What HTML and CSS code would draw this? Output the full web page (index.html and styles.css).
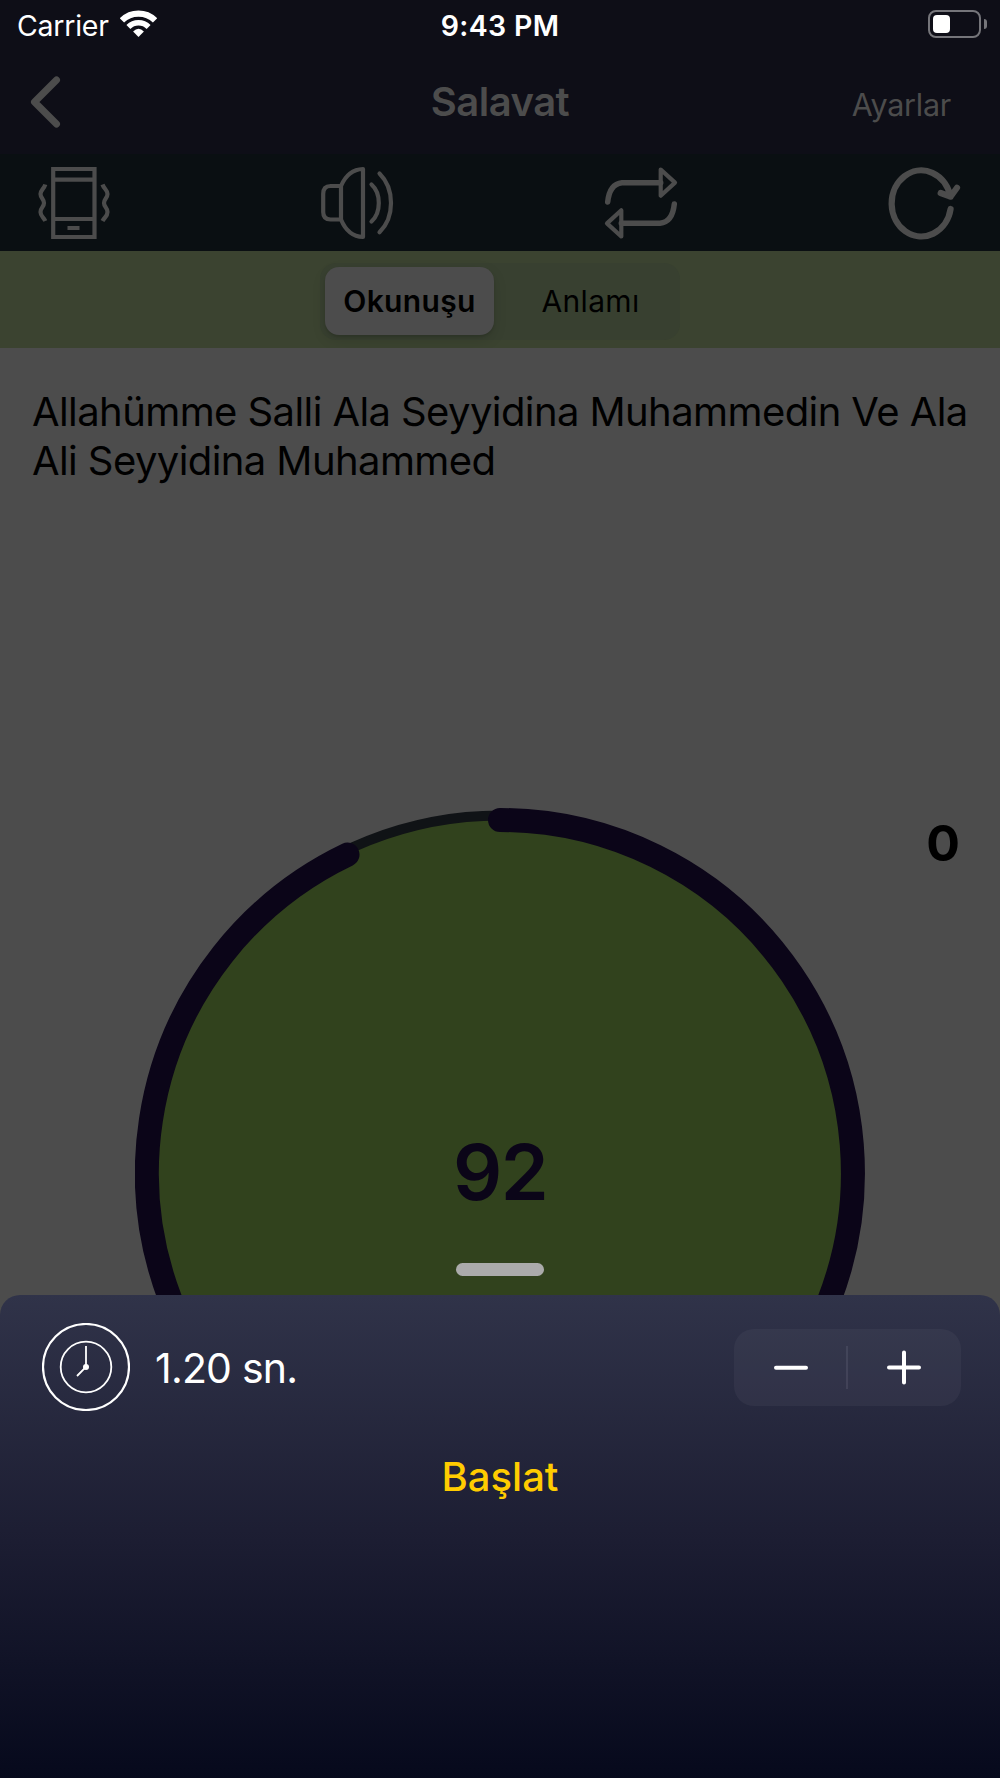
FILE: index.html
```html
<!DOCTYPE html>
<html lang="tr">
<head>
<meta charset="utf-8">
<title>Salavat</title>
<link rel="stylesheet" href="styles.css">
</head>
<body>
<div class="screen">
  <header class="header">
    <div class="status">
      <div class="carrier">
        <span class="carrier-name">Carrier</span>
        <svg class="wifi" width="37" height="27" viewBox="0 0 37 27">
          <path d="M1.9 10.4a23.5 23.5 0 0 1 33.2 0" stroke-width="6.2"/>
          <path d="M8.4 16.9a14.3 14.3 0 0 1 20.2 0" stroke-width="5.6"/>
          <path class="solid" d="M18.5 27l-5.4-5.4q5.4-5.6 10.8 0z"/>
        </svg>
      </div>
      <span class="time">9:43 PM</span>
      <div class="battery"><span class="battery-body"><span class="battery-level"></span></span><span class="battery-tip"></span></div>
    </div>
    <nav class="nav">
      <svg class="back" width="31" height="52" viewBox="0 0 31 52"><path d="M26.5 4L4.5 26l22 22"/></svg>
      <h1 class="title">Salavat</h1>
      <span class="settings">Ayarlar</span>
    </nav>
  </header>

  <div class="toolbar">
    <svg class="tool" viewBox="0 0 72 72">
      <path d="M15.2 2h41.3v68H15.2zM15.2 12.6h41.3M15.2 52h41.3M29.5 61h12"/>
      <path d="M7.3 17.5C6 22 2.5 23 2.5 27S6 32 6 36s-3.5 4.5-3.5 9S5.5 50 7.3 54M64.5 17.5C66 22 69.5 23 69.500 27S66 32 66 36s3.500 4.500 3.500 9S66.500 50 64.500 54"/>
    </svg>
    <svg class="tool round" viewBox="0 0 72 72">
      <path d="M20 19H9.500Q2.200 19 2.200 27V45Q2.200 52.500 9.500 52.500H20zM20 19Q27 2.500 42 2V70Q27 69.500 20 52.500"/>
      <path d="M50.500 17.500Q57.800 24 57.800 36T50.500 54.500M58.500 6.500Q70 18 70 36T58.500 65.300"/>
    </svg>
    <svg class="tool round" viewBox="0 0 72 72">
      <path d="M55.700 2.500L70 15.600L55.700 28.700zM16.300 43.300V69.500L2 56.400z"/>
      <path class="thick" d="M55.700 15.700H17Q4.500 17 2.700 35"/>
      <path class="thick" d="M16.300 56.300H55Q67.500 55 69.300 37"/>
    </svg>
    <svg class="tool round" viewBox="0 0 72 72">
      <path class="heavy" d="M62.600 42A29.700 33 0 1 1 62.400 29.700M52.700 26L62.500 29.700L69 20.700"/>
    </svg>
  </div>

  <div class="segment-bar">
    <div class="segments">
      <span class="segment active">Okunuşu</span>
      <span class="segment">Anlamı</span>
    </div>
  </div>

  <main class="stage">
    <p class="prayer">Allahümme Salli Ala Seyyidina Muhammedin Ve Ala<br>Ali Seyyidina Muhammed</p>
    <div class="total">0</div>
    <div class="counter">
      <svg class="ring" width="730" height="730" viewBox="-365 -365 730 730">
        <circle class="disc" r="358"/>
        <circle class="track" r="357.500"/>
        <path class="progress" d="M0 -353A353 353 0 1 1 -152.500 -318.400"/>
      </svg>
      <span class="count">92</span>
    </div>
    <div class="handle"></div>
  </main>

  <section class="sheet">
    <div class="interval">
      <svg class="clock" width="88" height="88" viewBox="-44 -44 88 88">
        <circle r="43"/>
        <circle class="thin" r="25.300"/>
        <path class="thin" d="M0 -21V0L-9 9"/>
        <circle class="pin" r="3"/>
      </svg>
      <span class="seconds">1.20 sn.</span>
      <div class="stepper">
        <svg width="112" height="77" viewBox="0 0 112 77"><path d="M42 38.800H72"/></svg>
        <span class="divider"></span>
        <svg width="112" height="77" viewBox="0 0 112 77"><path d="M41 38.500H71M56 23.500V53.500"/></svg>
      </div>
    </div>
    <div class="start">Başlat</div>
  </section>
</div>
</body>
</html>
```
FILE: styles.css
```css
* { box-sizing: border-box; }

body {
  margin: 0;
  font-family: Inter, "Liberation Sans", sans-serif;
  background: #4c4c4c;
}

svg { display: block; flex: none; fill: none; }

.screen {
  width: 1000px;
  height: 1778px;
  display: flex;
  flex-direction: column;
  overflow: hidden;
}

.header { height: 154px; flex: none; background: #0e0e17; }

.status {
  height: 50px;
  padding: 0 13px 0 17px;
  display: grid;
  grid-template-columns: 1fr auto 1fr;
  color: #fff;
  font-size: 28.5px;
  line-height: 51px;
}
.carrier { display: flex; gap: 11px; }
.carrier-name { letter-spacing: -0.25px; }
.wifi { margin-top: 10px; stroke: #fff; }
.wifi .solid { fill: #fff; stroke: none; }
.time { margin: 0 0 0 -4px; font-weight: 600; letter-spacing: 0.35px; }
.battery { display: flex; justify-content: flex-end; gap: 3px; padding-top: 10px; }
.battery-body {
  width: 53px;
  height: 28px;
  padding: 3px;
  border: 2px solid #75757a;
  border-radius: 8px;
}
.battery-level { display: block; width: 17px; height: 18px; border-radius: 4px; background: #fff; }
.battery-tip { width: 3px; height: 10px; margin-top: 9px; border-radius: 0 4px 4px 0; background: #75757a; }

.nav {
  height: 104px;
  padding: 0 49px 0 30px;
  display: grid;
  grid-template-columns: 1fr auto 1fr;
  color: #4c4c4c;
}
.back { margin-top: 26px; stroke: #4c4c4c; stroke-width: 7; stroke-linecap: round; stroke-linejoin: round; }
.title { margin: 0 -19px 0 0; font-size: 40px; font-weight: 600; line-height: 103px; letter-spacing: -0.5px; }
.settings { justify-self: end; font-size: 30.5px; line-height: 110px; letter-spacing: -0.25px; }

.toolbar {
  height: 97px;
  flex: none;
  padding: 13px 40px 0 38px;
  display: flex;
  justify-content: space-between;
  background: #0a0f12;
}
.tool { width: 72px; height: 72px; stroke: #4c4c4c; stroke-width: 4.2; overflow: visible; }
.round { stroke-linecap: round; stroke-linejoin: round; }
.tool .thick { stroke-width: 5.5; }
.tool .heavy { stroke-width: 6.2; }

.segment-bar {
  height: 97px;
  flex: none;
  padding-top: 12px;
  display: flex;
  justify-content: center;
  background: #3b4330;
}
.segments {
  width: 360px;
  height: 77px;
  padding: 4px 5px;
  display: flex;
  border-radius: 16px;
  background: #384030;
}
.segment { flex: 1; height: 68px; padding-left: 12px; text-align: center; font-size: 30px; line-height: 69px; letter-spacing: 0.35px; }
.active {
  flex: 0 0 169px;
  padding-left: 0;
  border-radius: 14px;
  background: #4c4c4c;
  font-weight: 600;
  box-shadow: 0 5px 14px rgba(0, 0, 0, 0.12), 0 2px 2px rgba(0, 0, 0, 0.1);
}

.stage {
  position: relative;
  height: 967px;
  margin-bottom: -20px;
  flex: none;
  overflow: hidden;
  background: #4c4c4c;
}
.prayer { margin: 0; padding: 39px 0 0 32px; font-size: 40px; line-height: 49px; letter-spacing: -0.59px; white-space: nowrap; }
.total {
  position: absolute;
  top: 465px;
  right: 40px;
  font-size: 50px;
  font-weight: 700;
  line-height: 60px;
}
.counter {
  width: 730px;
  height: 730px;
  margin: 323px auto 0;
  display: grid;
  place-items: center;
}
.counter > * { grid-area: 1 / 1; }
.disc { fill: #31421d; }
.track { stroke: #101316; stroke-width: 10; }
.progress { stroke: #0b0518; stroke-width: 24; stroke-linecap: round; }
.count { padding-bottom: 2px; color: #0b0518; font-size: 77px; font-weight: 600; line-height: 92px; letter-spacing: -1.5px; }
.handle {
  position: absolute;
  top: 915px;
  left: 456px;
  width: 88px;
  height: 13px;
  border-radius: 7px;
  background: #ababab;
}

.sheet {
  position: relative;
  flex: 1;
  padding: 28px 39px 0 42px;
  border-radius: 20px 20px 0 0;
  background: linear-gradient(#303349, #1c1d32 51%, #06091c);
}
.interval { display: flex; color: #fff; }
.seconds { margin-left: 25px; font-size: 41px; line-height: 91px; letter-spacing: -0.8px; }
.stepper {
  width: 227px;
  height: 77px;
  margin: 6px 0 0 auto;
  display: flex;
  align-items: center;
  border-radius: 20px;
  background: rgba(118, 118, 128, 0.12);
  stroke: #fff;
  stroke-width: 4;
  stroke-linecap: round;
}
.divider { width: 2px; height: 43px; background: rgba(130, 130, 150, 0.2); }
.clock { stroke: #fff; stroke-width: 2.2; }
.clock .thin { stroke-width: 1.8; }
.clock .pin { fill: #fff; stroke: none; }
.start { margin: 33px 0 0 -3px; color: #fc0; font-size: 40px; font-weight: 500; line-height: 60px; text-align: center; }
```
